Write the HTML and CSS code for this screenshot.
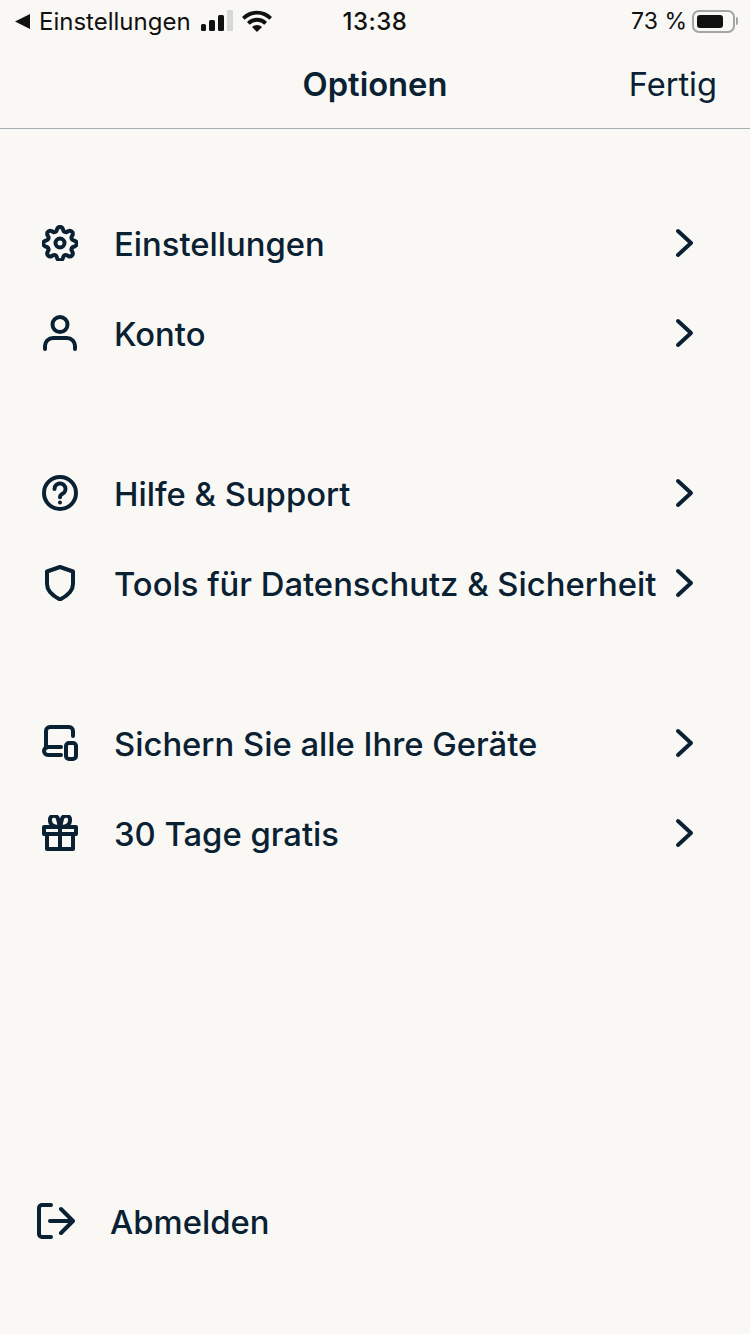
FILE: index.html
```html
<!DOCTYPE html>
<html lang="de">
<head>
  <meta charset="UTF-8" />
  <title>Optionen</title>
  <link rel="stylesheet" href="styles.css">
</head>
<body>
  <div class="page">
    <div class="status">
      <div class="status-left">
        <svg class="back" viewBox="0 0 16 16"><path d="M16 0v16L0 8z"/></svg>
        <span>Einstellungen</span>
        <svg class="signal" viewBox="0 0 32 21">
          <rect x="0" y="14" width="5" height="7" rx="1.5"/>
          <rect x="8" y="10" width="6" height="11" rx="1.500"/>
          <rect x="17" y="5" width="6" height="16" rx="1.500"/>
          <rect x="26" y="0" width="6" height="21" fill="#d8d8d6"/>
        </svg>
        <svg class="wifi" viewBox="0 0 30 23">
          <path d="M0 8a21 21 0 0 1 30 0l-2.600 2.800a17.300 17.300 0 0 0-24.800 0z"/>
          <path d="M5 13a14 14 0 0 1 20 0l-2.700 2.800a10.200 10.200 0 0 0-14.600 0z"/>
          <path d="M10 18a7 7 0 0 1 10 0l-5 5z"/>
        </svg>
      </div>
      <div class="status-time">13:38</div>
      <div class="status-right">
        <span>73 %</span>
        <div class="battery"><div class="battery-level"></div></div>
        <div class="battery-tip"></div>
      </div>
    </div>

    <header class="nav">
      <div></div>
      <h1>Optionen</h1>
      <a class="done">Fertig</a>
    </header>

    <main class="menu">
      <section class="group">
        <div class="row">
          <svg class="icon" viewBox="0 0 36 36"><path d="M15.200 3.800a3 3 0 0 1 5.600 0l.6 1.700a2.500 2.500 0 0 0 3.500 1.400l1.600-.8a3 3 0 0 1 4 4l-.8 1.600a2.500 2.500 0 0 0 1.400 3.500l1.700.6a3 3 0 0 1 0 5.600l-1.700.6a2.500 2.500 0 0 0-1.400 3.500l.8 1.600a3 3 0 0 1-4 4l-1.600-.8a2.500 2.500 0 0 0-3.500 1.400l-.6 1.700a3 3 0 0 1-5.600 0l-.6-1.700a2.500 2.500 0 0 0-3.500-1.400l-1.600.8a3 3 0 0 1-4-4l.8-1.600a2.500 2.500 0 0 0-1.400-3.500l-1.700-.6a3 3 0 0 1 0-5.600l1.700-.6a2.500 2.500 0 0 0 1.400-3.500l-.8-1.600a3 3 0 0 1 4-4l1.600.8a2.500 2.500 0 0 0 3.500-1.400z"/><circle cx="18" cy="18" r="4.500"/></svg>
          <span class="label">Einstellungen</span>
          <svg class="chev" viewBox="0 0 20 30"><path d="M3 3l13 12L3 27"/></svg>
        </div>
        <div class="row">
          <svg class="icon" viewBox="0 0 36 36"><circle cx="18" cy="9.500" r="7.500"/><path d="M3 34v-3a8 8 0 0 1 8-8h14a8 8 0 0 1 8 8v3"/></svg>
          <span class="label">Konto</span>
          <svg class="chev" viewBox="0 0 20 30"><path d="M3 3l13 12L3 27"/></svg>
        </div>
      </section>

      <section class="group">
        <div class="row">
          <svg class="icon" viewBox="0 0 36 36"><circle cx="18" cy="18" r="16"/><path d="M12.500 14a5.500 5.500 0 1 1 8 4.800c-1.500.8-2.500 1.700-2.500 3.400"/><path d="M18 27.500v.1"/></svg>
          <span class="label">Hilfe &amp; Support</span>
          <svg class="chev" viewBox="0 0 20 30"><path d="M3 3l13 12L3 27"/></svg>
        </div>
        <div class="row">
          <svg class="icon" viewBox="0 0 36 36"><path d="M18 2l13 4.500V19c0 6.500-5 11.500-13 15.500C10 30.500 5 25.500 5 19V6.500z"/></svg>
          <span class="label">Tools für Datenschutz &amp; Sicherheit</span>
          <svg class="chev" viewBox="0 0 20 30"><path d="M3 3l13 12L3 27"/></svg>
        </div>
      </section>

      <section class="group">
        <div class="row">
          <svg class="icon" viewBox="0 0 36 36"><path d="M31 11V6a4 4 0 0 0-4-4H8a4 4 0 0 0-4 4v17"/><path d="M19 30H6a3.500 3.500 0 0 1 0-8h13"/><rect x="24" y="18" width="10" height="16" rx="3"/></svg>
          <span class="label">Sichern Sie alle Ihre Geräte</span>
          <svg class="chev" viewBox="0 0 20 30"><path d="M3 3l13 12L3 27"/></svg>
        </div>
        <div class="row">
          <svg class="icon" viewBox="0 0 36 36"><path d="M2 12h32v7H2z"/><path d="M5 19v15h26V19"/><path d="M18 12v22"/><path d="M18 12c-3 0-10-1-10-6.500a3.800 3.800 0 0 1 8-1.500zM18 12c3 0 10-1 10-6.500a3.800 3.800 0 0 0-8-1.500z"/></svg>
          <span class="label">30 Tage gratis</span>
          <svg class="chev" viewBox="0 0 20 30"><path d="M3 3l13 12L3 27"/></svg>
        </div>
      </section>

      <div class="logout">
        <svg class="icon" viewBox="0 0 38 36"><path d="M14 2H5a3 3 0 0 0-3 3v26a3 3 0 0 0 3 3h9"/><path d="M13 18h22"/><path d="M24 6l12 12-12 12"/></svg>
        <span class="label">Abmelden</span>
      </div>
    </main>
  </div>
</body>
</html>
```

FILE: styles.css
```css
* {
  box-sizing: border-box;
}

body {
  margin: 0;
  background: #f9f8f4;
  color: #0a2133;
  font-family: Inter, "Liberation Sans", sans-serif;
}

.page {
  display: flex;
  flex-direction: column;
  height: 1334px;
  overflow: hidden;
}

/* status bar */
.status {
  display: grid;
  grid-template-columns: 1fr auto 1fr;
  align-items: center;
  height: 42px;
  padding: 0 12px 0 15px;
  color: #111;
  font-size: 24px;
}

.status-left,
.status-right {
  display: flex;
  align-items: center;
}

.status-right {
  justify-content: flex-end;
  font-size: 23px;
}

.back {
  width: 15px;
  height: 15px;
  margin-right: 9px;
  fill: #111;
}

.signal {
  width: 32px;
  height: 21px;
  margin: -2px 0 0 10px;
  fill: #111;
}

.wifi {
  width: 30px;
  height: 23px;
  margin: -2px 0 0 9px;
  fill: #111;
}

.status-time {
  padding-right: 3px;
  font-weight: 500;
  letter-spacing: 0.5px;
}

.battery {
  width: 43px;
  height: 23px;
  margin-left: 5px;
  padding: 3px;
  border: 2px solid #a4a6a6;
  border-radius: 7px;
}

.battery-level {
  width: 80%;
  height: 100%;
  background: #111;
  border-radius: 3px;
}

.battery-tip {
  width: 2px;
  height: 8px;
  margin-left: 1px;
  background: #a4a6a6;
  border-radius: 0 2px 2px 0;
}

/* nav */
.nav {
  display: grid;
  grid-template-columns: 1fr auto 1fr;
  align-items: center;
  height: 87px;
  padding: 0 33px 3px;
  border-bottom: 1px solid #a6b0b2;
}

.nav h1 {
  margin: 0;
  font-size: 32.700px;
  font-weight: 600;
}

.done {
  justify-self: end;
  font-size: 32.600px;
}

/* menu */
.menu {
  display: flex;
  flex-direction: column;
  flex: 1;
  gap: 70px;
  padding: 70px 0 67px;
}

.row,
.logout {
  display: flex;
  align-items: center;
  height: 90px;
  padding-left: 42px;
}

.logout {
  margin-top: auto;
  padding-left: 37px;
}

.icon {
  flex: none;
  width: 36px;
  height: 36px;
  margin-top: -2px;
  fill: none;
  stroke: #0a2133;
  stroke-width: 4;
  stroke-linecap: round;
  stroke-linejoin: round;
}

.logout .icon {
  width: 38px;
}

.label {
  flex: 1;
  margin-left: 36px;
  font-size: 32.800px;
  font-weight: 500;
  white-space: nowrap;
}

.logout .label {
  margin-left: 35px;
}

.chev {
  flex: none;
  width: 20px;
  height: 30px;
  margin: -3px 55px 0 0;
  fill: none;
  stroke: #0a2133;
  stroke-width: 4;
  stroke-linecap: round;
  stroke-linejoin: round;
}
```
